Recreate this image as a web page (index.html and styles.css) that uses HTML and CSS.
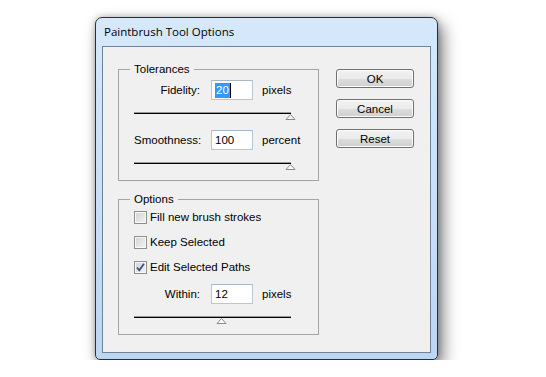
FILE: index.html
```html
<!DOCTYPE html>
<html lang="en">
<head>
    <meta charset="UTF-8">
    <title>Paintbrush Tool Options</title>
    <link rel="stylesheet" href="styles.css">
</head>
<body>
    <div class="window">
        <div class="titlebar">Paintbrush Tool Options</div>
        <div class="client">
            <div class="groups">
                <div class="group tolerances">
                    <div class="group-title">Tolerances</div>
                    <div class="field-row first">
                        <span class="field-label">Fidelity:</span>
                        <span class="text-box"><span class="selected">20</span><span class="caret"></span></span>
                        <span class="unit">pixels</span>
                    </div>
                    <div class="slider">
                        <div class="track"></div>
                        <svg class="thumb" width="11" height="6" viewBox="0 0 11 6" style="margin-left: 151px">
                            <path d="M5.5 0.5 L10 5.5 L1 5.5 Z" fill="#fafafa" stroke="#8a8a8a"/>
                        </svg>
                    </div>
                    <div class="field-row">
                        <span class="field-label">Smoothness:</span>
                        <span class="text-box">100</span>
                        <span class="unit">percent</span>
                    </div>
                    <div class="slider">
                        <div class="track"></div>
                        <svg class="thumb" width="11" height="6" viewBox="0 0 11 6" style="margin-left: 151px">
                            <path d="M5.5 0.5 L10 5.5 L1 5.5 Z" fill="#fafafa" stroke="#8a8a8a"/>
                        </svg>
                    </div>
                </div>

                <div class="group options">
                    <div class="group-title">Options</div>
                    <label class="check-row first">
                        <span class="checkbox"></span>
                        Fill new brush strokes
                    </label>
                    <label class="check-row">
                        <span class="checkbox"></span>
                        Keep Selected
                    </label>
                    <label class="check-row">
                        <span class="checkbox">
                            <svg width="11" height="11" viewBox="0 0 11 11">
                                <path d="M2 5.5 L4.3 8.3 L9 1.8" fill="none" stroke="#3b4f8c" stroke-width="1.8"/>
                            </svg>
                        </span>
                        Edit Selected Paths
                    </label>
                    <div class="field-row within">
                        <span class="field-label">Within:</span>
                        <span class="text-box">12</span>
                        <span class="unit">pixels</span>
                    </div>
                    <div class="slider">
                        <div class="track"></div>
                        <svg class="thumb" width="11" height="6" viewBox="0 0 11 6" style="margin-left: 82px">
                            <path d="M5.5 0.5 L10 5.5 L1 5.5 Z" fill="#fafafa" stroke="#8a8a8a"/>
                        </svg>
                    </div>
                </div>
            </div>

            <div class="buttons">
                <button class="btn">OK</button>
                <button class="btn">Cancel</button>
                <button class="btn">Reset</button>
            </div>
        </div>
    </div>
</body>
</html>
```

FILE: styles.css
```css
body {
    margin: 0;
    background-color: #ffffff;
    font-family: "Liberation Sans", Arial, sans-serif;
    font-size: 11.5px;
    color: #000;
}
.window {
    box-sizing: border-box;
    width: 343px;
    height: 343px;
    margin: 17px 0 0 95px;
    border: 1px solid #2e2e2e;
    border-radius: 7px 7px 5px 5px;
    background: linear-gradient(#d6e8fb, #bcd7f3);
    padding: 0 6px 6px 6px;
    display: flex;
    flex-direction: column;
    box-shadow: 5px 7px 16px rgba(0,0,0,0.5), 0 0 6px rgba(0,0,0,0.25);
}
.titlebar {
    height: 28px;
    line-height: 28px;
    padding-left: 2px;
    font-family: "Open Sans", sans-serif;
    font-size: 11.5px;
    color: #000;
}
.client {
    flex: 1;
    display: flex;
    align-items: flex-start;
    border: 1px solid #6f8296;
    background-color: #f0f0f0;
    padding: 22px 0 0 15px;
}
.groups {
    width: 201px;
}
.group {
    box-sizing: border-box;
    width: 201px;
    border: 1px solid #a4a4a4;
}
.tolerances {
    height: 112px;
}
.options {
    height: 136px;
    margin-top: 18px;
}
.group-title {
    display: table;
    margin: -8px 0 0 11px;
    padding: 0 4px;
    line-height: 14px;
    background-color: #f0f0f0;
}
.field-row {
    display: flex;
    align-items: center;
    height: 20px;
    margin-top: 10px;
    padding-left: 15px;
}
.field-row.first {
    margin-top: 4px;
}
.field-row.within {
    margin-top: 9px;
}
.field-label {
    width: 66px;
    text-align: right;
}
.text-box {
    box-sizing: border-box;
    display: flex;
    align-items: center;
    width: 42px;
    height: 20px;
    margin-left: 11px;
    padding-left: 3px;
    background-color: #fff;
    border: 1px solid #b9c6d4;
    border-top-color: #a7b6c8;
}
.selected {
    background-color: #3399ff;
    color: #fff;
    line-height: 15px;
    padding: 0 1px;
}
.caret {
    width: 1px;
    height: 15px;
    background-color: #000;
}
.unit {
    margin-left: 9px;
}
.slider {
    margin: 12px 0 0 15px;
    width: 157px;
    height: 8px;
}
.track {
    height: 1px;
    border-top: 1px solid #9a9a9a;
    background-color: #000;
}
.thumb {
    display: block;
    margin-top: 0;
}
.check-row {
    display: flex;
    align-items: center;
    height: 16px;
    margin-top: 9px;
    padding-left: 15px;
}
.check-row.first {
    margin-top: 3px;
}
.checkbox {
    box-sizing: border-box;
    width: 13px;
    height: 13px;
    margin-right: 3px;
    border: 1px solid #8e8f8f;
    background: linear-gradient(135deg, #d2d2d2, #f4f4f4);
    box-shadow: inset 0 0 0 1px #f8f8f8;
    display: flex;
    align-items: center;
    justify-content: center;
}
.buttons {
    display: flex;
    flex-direction: column;
    gap: 11px;
    margin-left: 17px;
}
.btn {
    box-sizing: border-box;
    width: 78px;
    height: 19px;
    padding: 0;
    font-family: "Liberation Sans", Arial, sans-serif;
    font-size: 11.5px;
    color: #000;
    border: 1px solid #707070;
    border-radius: 3px;
    background: linear-gradient(#f2f2f2 0%, #ebebeb 50%, #dddddd 51%, #cfcfcf 100%);
    box-shadow: inset 0 0 0 1px #fcfcfc;
}
```
